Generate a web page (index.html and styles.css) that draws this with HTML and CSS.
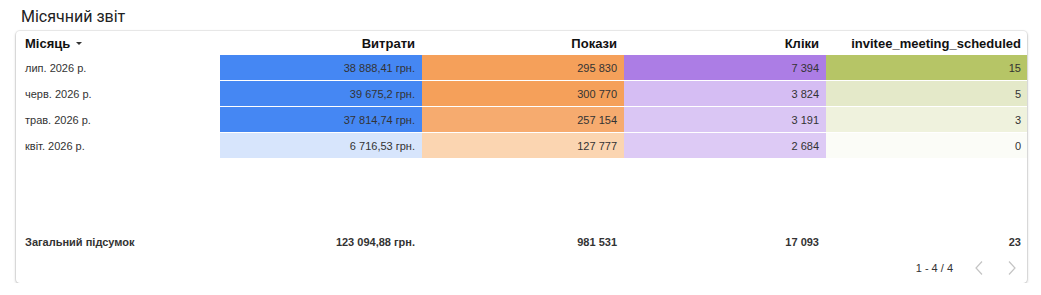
FILE: index.html
```html
<!DOCTYPE html>
<html lang="uk">
<head>
<meta charset="utf-8">
<link rel="stylesheet" href="styles.css">
</head>
<body>
<div class="page">
  <h1 class="title">Місячний звіт</h1>
  <div class="card">
    <div class="grid head">
      <div class="hc left">Місяць <span class="sort"></span></div>
      <div class="hc">Витрати</div>
      <div class="hc">Покази</div>
      <div class="hc">Кліки</div>
      <div class="hc">invitee_meeting_scheduled</div>
    </div>
    <div class="rows">
      <div class="grid row">
        <div class="c left">лип. 2026 р.</div>
        <div class="c b1">38 888,41 грн.</div>
        <div class="c o1">295 830</div>
        <div class="c p1">7 394</div>
        <div class="c g1">15</div>
      </div>
      <div class="grid row">
        <div class="c left">черв. 2026 р.</div>
        <div class="c b2">39 675,2 грн.</div>
        <div class="c o2">300 770</div>
        <div class="c p2">3 824</div>
        <div class="c g2">5</div>
      </div>
      <div class="grid row">
        <div class="c left">трав. 2026 р.</div>
        <div class="c b3">37 814,74 грн.</div>
        <div class="c o3">257 154</div>
        <div class="c p3">3 191</div>
        <div class="c g3">3</div>
      </div>
      <div class="grid row">
        <div class="c left">квіт. 2026 р.</div>
        <div class="c b4">6 716,53 грн.</div>
        <div class="c o4">127 777</div>
        <div class="c p4">2 684</div>
        <div class="c g4">0</div>
      </div>
    </div>
    <div class="grid total">
      <div class="c left">Загальний підсумок</div>
      <div class="c">123 094,88 грн.</div>
      <div class="c">981 531</div>
      <div class="c">17 093</div>
      <div class="c">23</div>
    </div>
    <div class="pager">
      <span class="count">1 - 4 / 4</span>
      <span class="nav prev"><svg width="10" height="16" viewBox="0 0 10 16"><path d="M8 1.5 L2 8 L8 14.5" fill="none" stroke="#c4c4c4" stroke-width="1.2"/></svg></span>
      <span class="nav next"><svg width="10" height="16" viewBox="0 0 10 16"><path d="M2 1.5 L8 8 L2 14.5" fill="none" stroke="#c4c4c4" stroke-width="1.2"/></svg></span>
    </div>
  </div>
</div>
</body>
</html>
```
FILE: styles.css
```css
* { box-sizing: border-box; }
html, body { margin: 0; padding: 0; background: #fff; }
body { font-family: "Liberation Sans", Arial, sans-serif; color: #333; }
.page { padding: 0 14px 0 16px; width: 1041px; }
.title {
  margin: 0;
  padding: 7px 0 0 5px;
  height: 31px;
  font-family: Roboto, "Liberation Sans", sans-serif;
  font-weight: 400;
  font-size: 16px;
  color: #222;
}
.card {
  width: 1011px;
  height: 252px;
  border-radius: 4px;
  background: #fff;
  box-shadow: 0 0 0 1px rgba(0,0,0,0.06), 0 1px 3px rgba(0,0,0,0.28);
  display: flex;
  flex-direction: column;
  overflow: hidden;
}
.grid {
  display: grid;
  grid-template-columns: 204px 202px 202px 202px 1fr;
}
.head { height: 24px; align-items: center; }
.hc {
  font-size: 13px;
  font-weight: 700;
  color: #111;
  text-align: right;
  padding: 0 7px 0 9px;
}
.hc:last-child { padding-right: 6px; }
.hc.left { text-align: left; display: flex; align-items: center; gap: 6px; }
.sort {
  width: 0; height: 0;
  border-left: 3px solid transparent;
  border-right: 3px solid transparent;
  border-top: 3px solid #333;
  margin-top: 1px;
}
.rows { display: flex; flex-direction: column; }
.row { height: 26px; border-bottom: 1px solid #fff; }
.row:last-child { height: 25px; border-bottom: 0; }
.c {
  font-size: 11px;
  color: #333;
  text-align: right;
  padding: 0 7px 0 9px;
  display: flex;
  align-items: center;
  justify-content: flex-end;
}
.c:last-child { padding-right: 6px; }
.c.left { justify-content: flex-start; }
.b1, .b2, .b3 { background: #4587f3; }
.b4 { background: #d7e5fc; }
.o1 { background: #f5a05a; }
.o2 { background: #f5a05a; }
.o3 { background: #f6ab6f; }
.o4 { background: #fbd5b1; }
.p1 { background: #ac7de5; }
.p2 { background: #d5bdf3; }
.p3 { background: #dac6f4; }
.p4 { background: #ddcaf5; }
.g1 { background: #b6c566; }
.g2 { background: #e4e9c9; }
.g3 { background: #eff2dd; }
.g4 { background: #fbfcf7; }
.total { margin-top: auto; height: 24px; }
.total .c { font-weight: 700; color: #333; }
.pager {
  height: 29px;
  display: flex;
  align-items: center;
  justify-content: flex-end;
  padding: 0 10px 2px 0;
}
.count { font-size: 11px; color: #333; }
.nav { display: flex; align-items: center; width: 10px; }
.prev { margin-left: 21px; }
.next { margin-left: 23px; }
```
